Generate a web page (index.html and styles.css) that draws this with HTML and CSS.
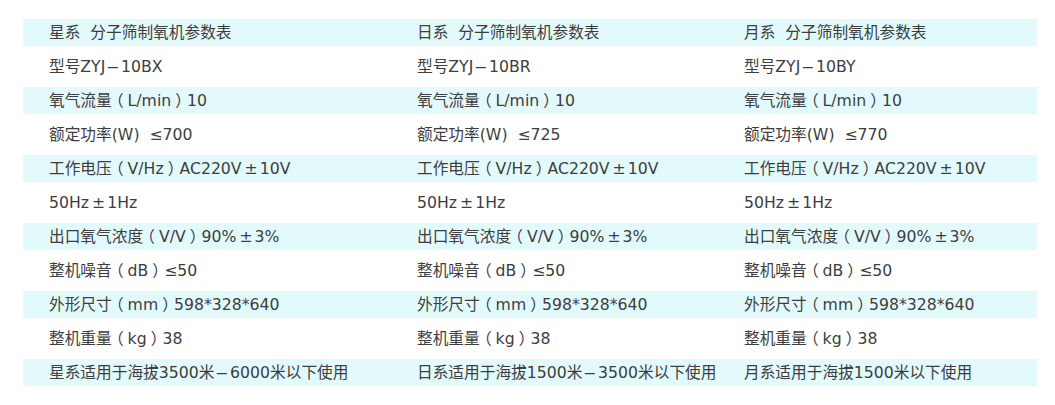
FILE: index.html
```html
<!DOCTYPE html>
<html lang="zh-CN">
<head>
<meta charset="utf-8">
<title>分子筛制氧机参数表</title>
<link rel="stylesheet" href="styles.css">
</head>
<body>
<table class="spec">
  <colgroup>
    <col class="c1">
    <col class="c2">
    <col class="c3">
  </colgroup>
  <tbody>
    <tr class="alt"><td>星系&nbsp;&nbsp;分子筛制氧机参数表</td><td>日系&nbsp;&nbsp;分子筛制氧机参数表</td><td>月系&nbsp;&nbsp;分子筛制氧机参数表</td></tr>
    <tr><td>型号ZYJ<span class="dash">-</span>10BX</td><td>型号ZYJ<span class="dash">-</span>10BR</td><td>型号ZYJ<span class="dash">-</span>10BY</td></tr>
    <tr class="alt"><td>氧气流量<span class="par">（</span>L/min<span class="par">）</span>10</td><td>氧气流量<span class="par">（</span>L/min<span class="par">）</span>10</td><td>氧气流量<span class="par">（</span>L/min<span class="par">）</span>10</td></tr>
    <tr><td>额定功率(W)&nbsp;&nbsp;≤700</td><td>额定功率(W)&nbsp;&nbsp;≤725</td><td>额定功率(W)&nbsp;&nbsp;≤770</td></tr>
    <tr class="alt"><td>工作电压<span class="par">（</span>V/Hz<span class="par">）</span>AC220V<span class="pm">±</span>10V</td><td>工作电压<span class="par">（</span>V/Hz<span class="par">）</span>AC220V<span class="pm">±</span>10V</td><td>工作电压<span class="par">（</span>V/Hz<span class="par">）</span>AC220V<span class="pm">±</span>10V</td></tr>
    <tr><td>50Hz<span class="pm">±</span>1Hz</td><td>50Hz<span class="pm">±</span>1Hz</td><td>50Hz<span class="pm">±</span>1Hz</td></tr>
    <tr class="alt"><td>出口氧气浓度<span class="par">（</span>V/V<span class="par">）</span>90%<span class="pm">±</span>3%</td><td>出口氧气浓度<span class="par">（</span>V/V<span class="par">）</span>90%<span class="pm">±</span>3%</td><td>出口氧气浓度<span class="par">（</span>V/V<span class="par">）</span>90%<span class="pm">±</span>3%</td></tr>
    <tr><td>整机噪音<span class="par">（</span>dB<span class="par">）</span>≤50</td><td>整机噪音<span class="par">（</span>dB<span class="par">）</span>≤50</td><td>整机噪音<span class="par">（</span>dB<span class="par">）</span>≤50</td></tr>
    <tr class="alt"><td>外形尺寸<span class="par">（</span>mm<span class="par">）</span>598*328*640</td><td>外形尺寸<span class="par">（</span>mm<span class="par">）</span>598*328*640</td><td>外形尺寸<span class="par">（</span>mm<span class="par">）</span>598*328*640</td></tr>
    <tr><td>整机重量<span class="par">（</span>kg<span class="par">）</span>38</td><td>整机重量<span class="par">（</span>kg<span class="par">）</span>38</td><td>整机重量<span class="par">（</span>kg<span class="par">）</span>38</td></tr>
    <tr class="alt"><td>星系适用于海拔3500米<span class="dash">-</span>6000米以下使用</td><td>日系适用于海拔1500米<span class="dash">-</span>3500米以下使用</td><td>月系适用于海拔1500米以下使用</td></tr>
  </tbody>
</table>
</body>
</html>
```
FILE: styles.css
```css
html, body {
  margin: 0;
  padding: 0;
  background: #ffffff;
}

body {
  font-family: "DejaVu Sans", "Noto Sans CJK SC", sans-serif;
  font-size: 15.7px;
  color: #3d3d3d;
}

.spec {
  table-layout: fixed;
  width: 1014px;
  border-collapse: separate;
  border-spacing: 0 7.3px;
  margin: 12px 0 0 23px;
}

.c1 { width: 368px; }
.c2 { width: 327px; }
.c3 { width: 319px; }

.spec td {
  height: 27px;
  padding: 0 0 0 26px;
  vertical-align: middle;
  white-space: nowrap;
  line-height: 20px;
}

.spec tr.alt td {
  background: #e3fafc;
}

.pm {
  margin: 0 2px 0 3px;
}

/* full-width parentheses set half-width, then centred with padding */
.par {
  font-feature-settings: "halt" 1;
  padding: 0 4px;
}

/* long dash between model numbers / altitudes */
.dash {
  display: inline-block;
  transform: scaleX(2.4);
  margin: 0 5px;
}
```
